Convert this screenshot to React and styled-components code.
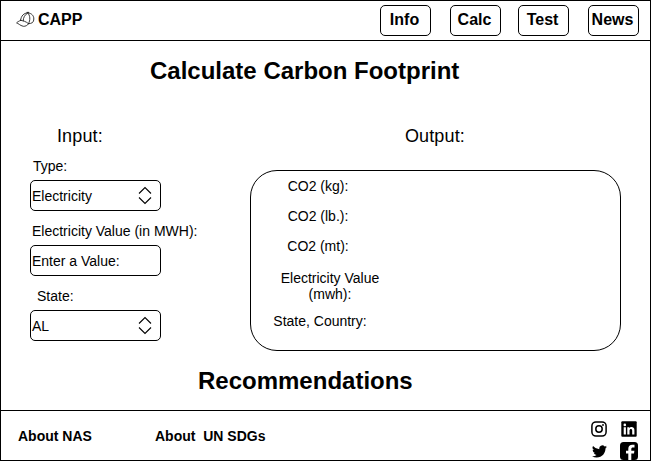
import React from 'react';
import styled, { createGlobalStyle } from 'styled-components';

const GlobalStyle = createGlobalStyle`
  * { box-sizing: border-box; }
  body { margin: 0; background: #fff; }
`;

const Page = styled.div`
  width: 651px;
  height: 461px;
  border: 1px solid #000;
  display: flex;
  flex-direction: column;
  overflow: hidden;
  color: #000;
  font-family: "Liberation Sans", Arial, sans-serif;
  font-size: 14px;
  line-height: 16px;
  white-space: pre;
`;

const Header = styled.header`
  flex: none;
  height: 40px;
  border-bottom: 1px solid #000;
  display: flex;
  align-items: flex-start;
  padding: 4px 11px 0 15px;
`;

const Brand = styled.div`
  display: flex;
  align-items: center;
  gap: 2px;
  height: 30px;
  margin-right: auto;
  font-size: 16px;
  font-weight: bold;
  svg { display: block; }
`;

const NavButton = styled.button`
  width: 51px;
  height: 31px;
  margin: 0 0 0 ${(p) => p.$gap}px;
  padding: 0 2px 1px 0;
  border: 1px solid #000;
  border-radius: 5px;
  background: #fff;
  color: #000;
  font: bold 16px/18px "Liberation Sans", Arial, sans-serif;
`;

const Main = styled.main`
  flex: 1;
  display: flex;
  flex-direction: column;
`;

const Heading = styled.h1`
  margin: ${(p) => p.$top}px 0 0 ${(p) => p.$left}px;
  font-size: 24px;
  line-height: 28px;
`;

const Columns = styled.div`
  display: flex;
  margin-top: 41px;
  height: 225px;
`;

const InputColumn = styled.section`
  width: 220px;
  margin-left: 29px;
`;

const OutputColumn = styled.section`
  width: 371px;
`;

const SectionTitle = styled.h2`
  margin: 0 0 0 ${(p) => p.$left}px;
  font-size: 18px;
  font-weight: normal;
  line-height: 20px;
  letter-spacing: 0.12px;
`;

const Label = styled.label`
  display: block;
  margin: ${(p) => p.$top}px 0 6px ${(p) => p.$left}px;
`;

const Field = styled.div`
  width: 131px;
  height: 31px;
  padding: 0 8px 0 1px;
  border: 1px solid #000;
  border-radius: 5px;
  display: flex;
  align-items: center;
  justify-content: space-between;
`;

const OutputPanel = styled.div`
  height: 181px;
  margin-top: 24px;
  padding-top: 7px;
  border: 1px solid #000;
  border-radius: 27px;
`;

const Result = styled.div`
  width: 120px;
  margin: 0 0 ${(p) => p.$gap}px ${(p) => p.$left}px;
  text-align: center;
`;

const Footer = styled.footer`
  flex: none;
  height: 50px;
  border-top: 1px solid #000;
  display: flex;
  align-items: center;
  padding-left: 17px;
  font-weight: bold;
`;

const FooterLink = styled.span`
  width: ${(p) => p.$width}px;
`;

const Social = styled.div`
  margin-left: auto;
  margin-right: 11px;
  align-self: flex-start;
  display: grid;
  grid-template-columns: 20px 20px;
  grid-template-rows: 18px 18px;
  column-gap: 10px;
  row-gap: 4px;
  place-items: center;
  padding-top: 9px;
  svg { display: block; }
`;

const Chevrons = () => (
  <svg width="14" height="19" viewBox="0 0 14 19" fill="none" stroke="#000" strokeWidth="1.1">
    <path d="M1 7.500 7 1.500 13 7.500M1 11.500 7 17.500 13 11.500" />
  </svg>
);

const Cap = () => (
  <svg width="20" height="18" viewBox="0 0 20 18" fill="none" stroke="#222" strokeWidth=".9" strokeLinecap="round" strokeLinejoin="round">
    <path d="M4.600 9.300C5 4.800 8 2 11.800 1.900c3.700.2 6.200 2.900 6 6.100 0 1.400-.5 2.800-1.500 3.700-1 .7-2.500.9-3.800 1" />
    <path d="M4.600 9.300C2.900 10.200 1.300 11 .6 11.900c1.800.4 3.200 2.600 6.700 3.400 2.100.2 4.300-1 5.200-2.600-2.300-2-5.300-3.100-7.900-3.400z" />
    <path d="M11.800 1.900C8.600 4 7.300 6.400 7.200 9.900M11.800 1.900c2.500 2.700 2.700 7 .7 10.800M11 1.400h1.700" />
  </svg>
);

const Instagram = () => (
  <svg width="16" height="16" viewBox="0 0 16 16" fill="none" stroke="#000" strokeWidth="1.5">
    <rect x=".9" y=".9" width="14.200" height="14.200" rx="4" />
    <circle cx="8" cy="8" r="3.200" />
    <circle cx="12" cy="4" r=".9" fill="#000" stroke="none" />
  </svg>
);

const LinkedIn = () => (
  <svg width="16" height="16" viewBox="0 0 16 16">
    <rect x=".3" y=".3" width="15.400" height="15.400" rx="1" />
    <circle cx="3.800" cy="3.900" r="1.300" fill="#fff" />
    <path fill="#fff" d="M2.700 6.200h2.200v7.200H2.700zM6.300 6.200h2.100v1c.8-1.600 5-1.800 5 1.900v4.300h-2.200V9.600c0-2.300-2.700-2.100-2.700 0v3.800H6.300z" />
  </svg>
);

const Twitter = () => (
  <svg width="15" height="15" viewBox="0 0 24 24">
    <path d="M23.950 4.570a10 10 0 0 1-2.820.770 4.960 4.960 0 0 0 2.160-2.720 9.900 9.900 0 0 1-3.120 1.190 4.920 4.920 0 0 0-8.380 4.480A13.900 13.900 0 0 1 1.640 3.160a4.920 4.920 0 0 0 1.520 6.570 4.900 4.900 0 0 1-2.230-.620v.060a4.920 4.920 0 0 0 3.950 4.830 5 5 0 0 1-2.210.080 4.940 4.940 0 0 0 4.600 3.420A9.900 9.900 0 0 1 0 19.540a14 14 0 0 0 7.550 2.210c9.050 0 14-7.500 14-13.980v-.640a10 10 0 0 0 2.400-2.560z" />
  </svg>
);

const Facebook = () => (
  <svg width="18" height="18" viewBox="0 0 18 18">
    <rect width="18" height="18" rx="3.500" />
    <path fill="#fff" d="M8.300 18v-6.500H6V8.700h2.300V6.700C8.300 4 9.900 2.700 12.300 2.700h2.200v2.700h-1.400c-1.400 0-1.800.6-1.800 1.600v1.700h3.100l-.4 2.800h-2.700V18z" />
  </svg>
);

export default function App() {
  return (
    <>
      <GlobalStyle />
      <Page>
        <Header>
          <Brand><Cap />CAPP</Brand>
          <NavButton $gap={0}>Info</NavButton>
          <NavButton $gap={19}>Calc</NavButton>
          <NavButton $gap={17}>Test</NavButton>
          <NavButton $gap={19}>News</NavButton>
        </Header>
        <Main>
          <Heading $top={16} $left={149}>Calculate Carbon Footprint</Heading>
          <Columns>
            <InputColumn>
              <SectionTitle $left={27}>Input:</SectionTitle>
              <Label $top={12} $left={3}>Type:</Label>
              <Field>Electricity<Chevrons /></Field>
              <Label $top={12} $left={2}>Electricity Value (in MWH):</Label>
              <Field>Enter a Value:</Field>
              <Label $top={12} $left={7}>State:</Label>
              <Field>AL<Chevrons /></Field>
            </InputColumn>
            <OutputColumn>
              <SectionTitle $left={155}>Output:</SectionTitle>
              <OutputPanel>
                <Result $gap={14} $left={7}>CO2 (kg):</Result>
                <Result $gap={14} $left={7}>CO2 (lb.):</Result>
                <Result $gap={16} $left={7}>CO2 (mt):</Result>
                <Result $gap={11} $left={19}>{'Electricity Value\n(mwh):'}</Result>
                <Result $gap={0} $left={9}>State, Country:</Result>
              </OutputPanel>
            </OutputColumn>
          </Columns>
          <Heading as="h2" $top={16} $left={197}>Recommendations</Heading>
        </Main>
        <Footer>
          <FooterLink $width={137}>About NAS</FooterLink>
          <FooterLink $width={140}>{'About  UN SDGs'}</FooterLink>
          <Social><Instagram /><LinkedIn /><Twitter /><Facebook /></Social>
        </Footer>
      </Page>
    </>
  );
}
